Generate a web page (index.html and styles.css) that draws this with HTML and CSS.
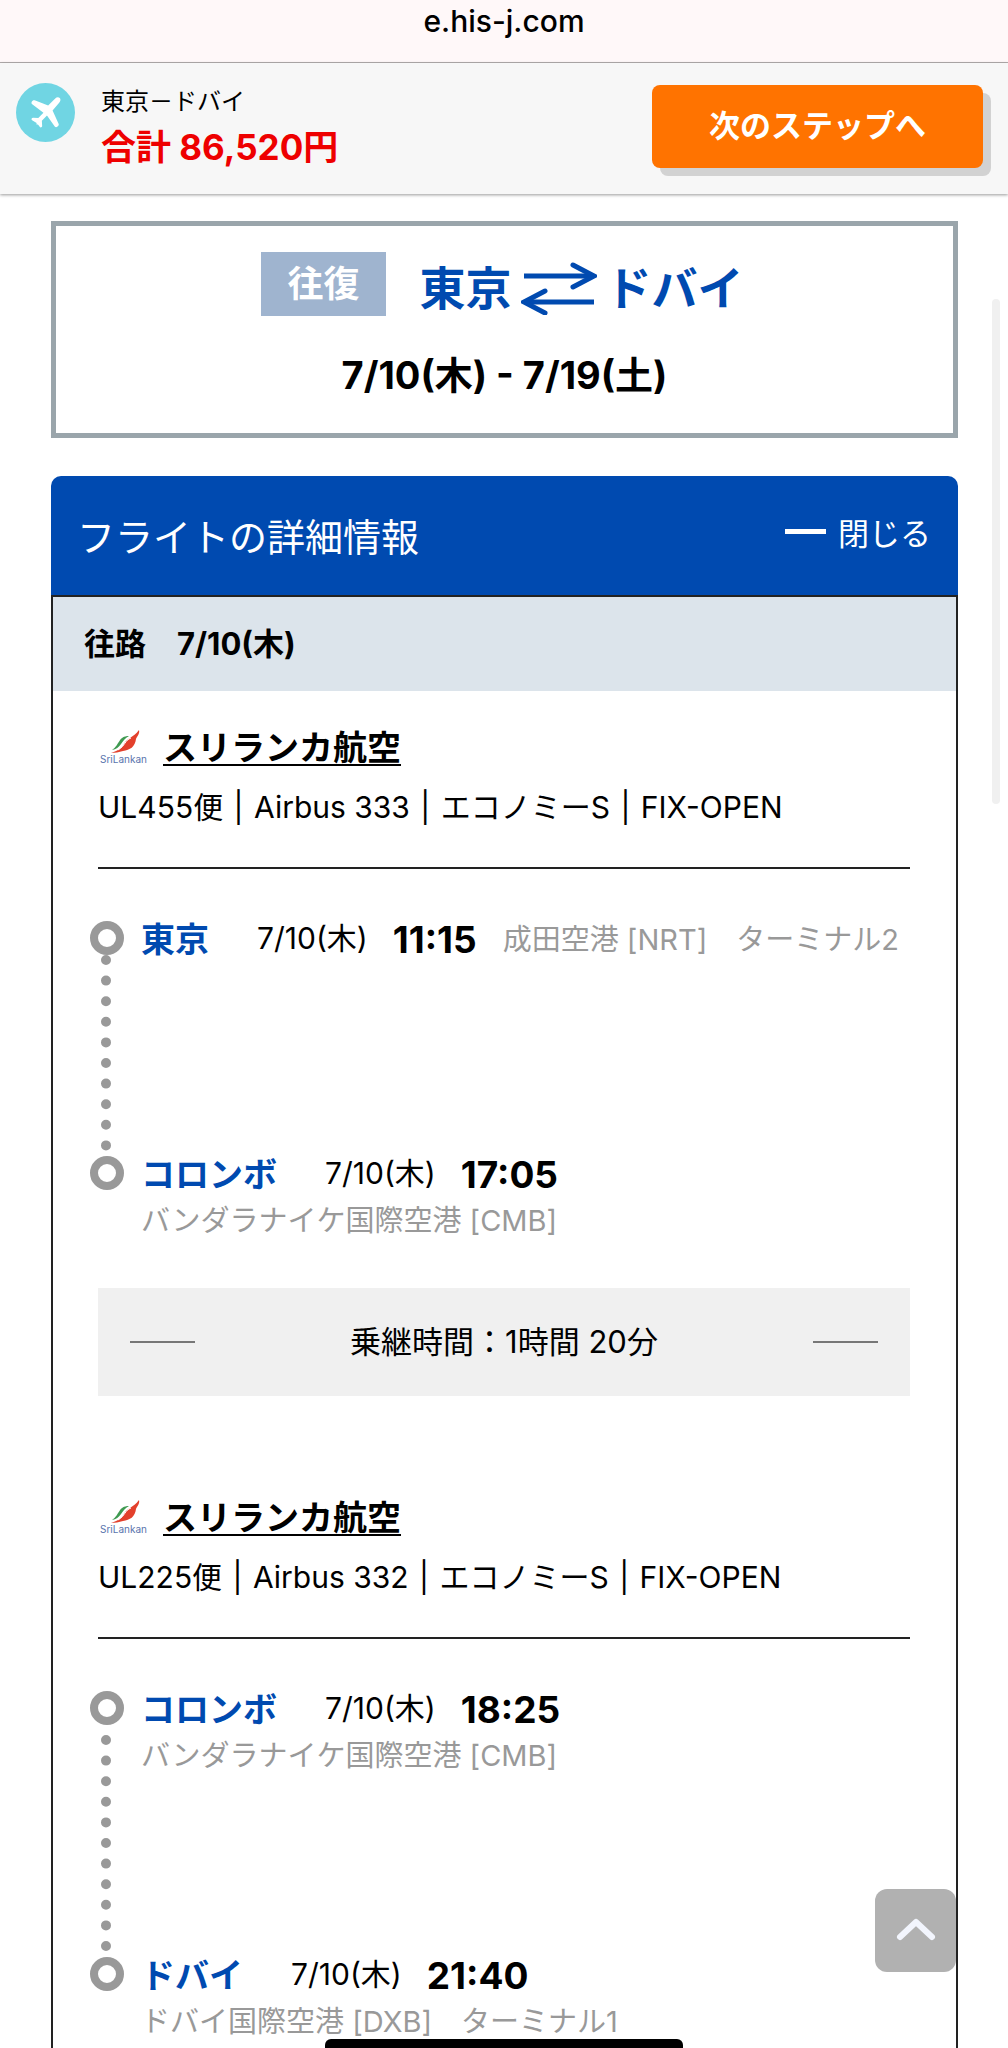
FILE: index.html
```html
<!DOCTYPE html>
<html lang="ja">
  <head>
    <meta charset="UTF-8" />
    <meta name="viewport" content="width=device-width, initial-scale=1.0" />
    <title>東京－ドバイ</title>
    <link rel="stylesheet" href="styles.css">
  </head>
  <body>
    <div class="url-bar">e.his-j.com</div>

    <header class="total-bar">
      <svg class="plane" viewBox="0 0 60 60" aria-hidden="true">
        <circle cx="30" cy="30" r="30" fill="#70d5e3" />
        <path fill="#fff" d="M44.500 15.300c1.200 1.200.8 3.200-.6 4.800l-6.700 7.800 6.200 13.900c.8 2-2.600 4.400-4 2.500l-7.900-11.300-5.200 5.400.3 5.400c0 1.300-1.700 2-2.500.8l-1.800-2.500-1.500.2.200-1.600-4.600-2.700c-1.300-.9-.5-2.600 1-2.600l5.300.3 5.200-5.400L16.500 21.600c-1.900-1.400.2-4.800 2.500-4L32.700 23l7.200-7.300c1.400-1.500 3.500-1.700 4.600-.4z" />
      </svg>
      <div class="total">
        <p class="total-route">東京－ドバイ</p>
        <p class="total-price">合計 86,520円</p>
      </div>
      <button type="button" class="next-button">次のステップへ</button>
    </header>

    <main>
      <section class="trip">
        <div class="trip-row">
          <span class="trip-type">往復</span>
          <h1 class="trip-route">
            東京
            <svg class="arrows" viewBox="0 0 76 54" aria-hidden="true">
              <g fill="none" stroke="#004ab0" stroke-width="5">
                <path d="M3 15H71" />
                <path d="M6 41H73" />
                <path d="M52 4l21 11-21 11" stroke-linecap="round" />
                <path d="M24 30L3 41l21 11" stroke-linecap="round" />
              </g>
            </svg>
            ドバイ
          </h1>
        </div>
        <p class="trip-dates">7/10(木) - 7/19(土)</p>
      </section>

      <section class="flight">
        <div class="flight-header">
          <h2>フライトの詳細情報</h2>
          <button type="button" class="close-button">閉じる</button>
        </div>

        <div class="flight-body">
          <h3 class="flight-date">往路　7/10(木)</h3>

          <div class="segment">
            <div class="airline">
              <svg class="airline-logo" viewBox="0 0 50 38" aria-hidden="true">
                <path fill="#e3402c" d="M41 1c1 4-2 6-3 9-1 8-6 11-13 12-4 1-8 2-12 2 8-3 11-5 13-9 3-6 9-6 15-14z" />
                <path fill="#3f9a51" d="M31 7c-11 0-9 9-17 14 9-1 9-10 17-14z" />
                <path fill="none" stroke="#fff" stroke-width="1" d="M33 9c-6 2-6 8-13 12" />
                <text x="2" y="34" font-size="10" fill="#5874ad">SriLankan</text>
              </svg>
              <a href="#" class="airline-name">スリランカ航空</a>
            </div>
            <p class="segment-detail">UL455便 <span>|</span> Airbus 333 <span>|</span> エコノミーS <span>|</span> FIX-OPEN</p>

            <div class="stops">
              <div class="stop">
                <div class="marker">
                  <span class="ring"></span>
                  <svg class="dots" width="34" height="201" aria-hidden="true">
                    <path d="M16 5V191" />
                  </svg>
                </div>
                <div class="stop-info">
                  <span class="city">東京</span>
                  <span class="date">7/10(木)</span>
                  <span class="time">11:15</span>
                  <span class="airport">成田空港 [NRT]　ターミナル2</span>
                </div>
              </div>
              <div class="stop">
                <div class="marker"><span class="ring"></span></div>
                <div class="stop-info">
                  <span class="city">コロンボ</span>
                  <span class="date">7/10(木)</span>
                  <span class="time">17:05</span>
                  <span class="airport">バンダラナイケ国際空港 [CMB]</span>
                </div>
              </div>
            </div>

            <p class="layover">乗継時間：1時間 20分</p>
          </div>

          <div class="segment">
            <div class="airline">
              <svg class="airline-logo" viewBox="0 0 50 38" aria-hidden="true">
                <path fill="#e3402c" d="M41 1c1 4-2 6-3 9-1 8-6 11-13 12-4 1-8 2-12 2 8-3 11-5 13-9 3-6 9-6 15-14z" />
                <path fill="#3f9a51" d="M31 7c-11 0-9 9-17 14 9-1 9-10 17-14z" />
                <path fill="none" stroke="#fff" stroke-width="1" d="M33 9c-6 2-6 8-13 12" />
                <text x="2" y="34" font-size="10" fill="#5874ad">SriLankan</text>
              </svg>
              <a href="#" class="airline-name">スリランカ航空</a>
            </div>
            <p class="segment-detail">UL225便 <span>|</span> Airbus 332 <span>|</span> エコノミーS <span>|</span> FIX-OPEN</p>

            <div class="stops">
              <div class="stop">
                <div class="marker">
                  <span class="ring"></span>
                  <svg class="dots" width="34" height="232" aria-hidden="true">
                    <path d="M16 15V223" />
                  </svg>
                </div>
                <div class="stop-info">
                  <span class="city">コロンボ</span>
                  <span class="date">7/10(木)</span>
                  <span class="time">18:25</span>
                  <span class="airport">バンダラナイケ国際空港 [CMB]</span>
                </div>
              </div>
              <div class="stop">
                <div class="marker"><span class="ring"></span></div>
                <div class="stop-info">
                  <span class="city">ドバイ</span>
                  <span class="date">7/10(木)</span>
                  <span class="time">21:40</span>
                  <span class="airport">ドバイ国際空港 [DXB]　ターミナル1</span>
                </div>
              </div>
            </div>
          </div>
        </div>
      </section>
    </main>

    <button type="button" class="to-top" aria-label="ページの先頭へ">
      <svg width="40" height="24" viewBox="0 0 40 24" aria-hidden="true">
        <path d="M4 20L20 5l16 15" fill="none" stroke="#f2f5fd" stroke-width="6" stroke-linecap="round" stroke-linejoin="round" />
      </svg>
    </button>
    <div class="scroll-thumb"></div>
    <div class="home-bar"></div>
  </body>
</html>
```

FILE: styles.css
```css
* {
  box-sizing: border-box;
}
html {
  overflow: hidden;
}
body {
  margin: 0;
  font-family: Inter, "Noto Sans CJK JP", sans-serif;
  font-size: 30px;
  color: #000;
  background-color: #fff;
}
h1,
h2,
h3,
p {
  margin: 0;
}
button {
  padding: 0;
  border: none;
  font-family: inherit;
  color: #fff;
  cursor: pointer;
}

.url-bar {
  padding-bottom: 20px;
  border-bottom: 1px solid #b5afaf;
  background-color: #fff8f9;
  line-height: 42px;
  font-weight: 500;
  text-align: center;
}

.total-bar {
  display: flex;
  align-items: flex-start;
  padding: 20px 25px 17px 16px;
  background-color: #f7f7f7;
  box-shadow: 0 1px 3px rgba(0, 0, 0, 0.4);
}
.plane {
  width: 59px;
  height: 59px;
}
.total {
  flex: 1;
  margin-left: 26px;
  padding-bottom: 2px;
}
.total-route {
  font-size: 24px;
  line-height: 38px;
}
.total-price {
  padding-bottom: 2px;
  font-size: 35px;
  line-height: 52px;
  font-weight: 700;
  color: #ee0000;
}
.next-button {
  width: 331px;
  height: 83px;
  margin-top: 2px;
  padding-bottom: 6px;
  border-radius: 8px;
  background-color: #ff7300;
  box-shadow: 8px 8px 0 #d2d2d2;
  font-size: 31px;
  font-weight: 600;
}

main {
  padding: 27px 50px 0 51px;
}

.trip {
  padding: 26px 0 31px;
  border: 5px solid #9aa5ab;
  text-align: center;
}
.trip-row {
  display: flex;
  justify-content: center;
  padding-right: 4px;
}
.trip-type {
  padding: 0 26px;
  margin-right: 34px;
  background-color: #9fb4cf;
  color: #fff;
  font-size: 36px;
  line-height: 64px;
  font-weight: 600;
}
.trip-route {
  display: flex;
  align-items: center;
  gap: 9px;
  padding-top: 8px;
  color: #004ab0;
  font-size: 46px;
  line-height: 56px;
  font-weight: 600;
}
.arrows {
  width: 76px;
  height: 54px;
}
.trip-dates {
  margin-top: 32px;
  font-size: 38px;
  line-height: 54px;
  font-weight: 700;
}

.flight {
  margin-top: 38px;
}
.flight-header {
  display: flex;
  align-items: center;
  justify-content: space-between;
  height: 119px;
  padding: 0 27px 2px 26px;
  border-radius: 10px 10px 0 0;
  background-color: #004ab0;
  color: #fff;
}
.flight-header h2 {
  font-size: 38px;
  font-weight: 400;
}
.close-button {
  display: flex;
  align-items: center;
  gap: 12px;
  padding-bottom: 6px;
  background: none;
  font-size: 31px;
}
.close-button::before {
  content: "";
  width: 41px;
  height: 5px;
  background-color: #fff;
}
.flight-body {
  padding-bottom: 60px;
  border: 2px solid #222;
}
.flight-date {
  padding: 0 31px;
  background-color: #dce4eb;
  font-size: 31px;
  line-height: 94px;
  font-weight: 700;
}

.segment {
  padding: 34px 46px 0 45px;
}
.airline {
  display: flex;
  align-items: center;
  gap: 15px;
}
.airline-logo {
  width: 50px;
  height: 38px;
}
.airline-name {
  color: #000;
  font-size: 34px;
  line-height: 46px;
  font-weight: 600;
  text-decoration-thickness: 2px;
  text-underline-offset: 4px;
}
.segment-detail {
  margin-top: 13px;
  padding-bottom: 37px;
  border-bottom: 2px solid #222;
  line-height: 46px;
}
.segment-detail span {
  margin: 0 2px;
}

.stops {
  margin: 52px 0 0 -8px;
}
.stop {
  display: flex;
  gap: 17px;
}
.marker {
  width: 34px;
}
.ring {
  display: block;
  width: 34px;
  height: 34px;
  border: 8px solid #999;
  border-radius: 50%;
}
.dots {
  display: block;
  fill: none;
  stroke: #999;
  stroke-width: 10;
  stroke-linecap: round;
  stroke-dasharray: 0 20.600;
}
.stop-info {
  flex: 1;
  display: flex;
  flex-wrap: wrap;
  align-content: flex-start;
  row-gap: 8px;
  line-height: 38px;
}
.city {
  margin-right: 48px;
  color: #004ab0;
  font-size: 34px;
  font-weight: 600;
}
.date {
  margin-right: 25px;
  line-height: 34px;
}
.time {
  margin-right: 26px;
  font-size: 37px;
  font-weight: 700;
}
.airport {
  color: #999;
  font-size: 29px;
}

.layover {
  display: flex;
  align-items: center;
  justify-content: space-between;
  margin: 48px 0 65px;
  padding: 0 32px;
  background-color: #f0f0f0;
  font-size: 31px;
  line-height: 108px;
}
.layover::before,
.layover::after {
  content: "";
  width: 65px;
  height: 2px;
  background-color: #777;
}

.to-top {
  position: fixed;
  right: 52px;
  bottom: 76px;
  width: 81px;
  height: 83px;
  border-radius: 12px;
  background-color: #b1b1b1;
}
.scroll-thumb {
  position: fixed;
  top: 299px;
  right: 8px;
  width: 8px;
  height: 505px;
  border-radius: 4px;
  background-color: #f0f0f0;
}
.home-bar {
  position: fixed;
  bottom: 0;
  left: 50%;
  width: 358px;
  height: 9px;
  margin-left: -179px;
  border-radius: 6px 6px 0 0;
  background-color: #000;
}
```
